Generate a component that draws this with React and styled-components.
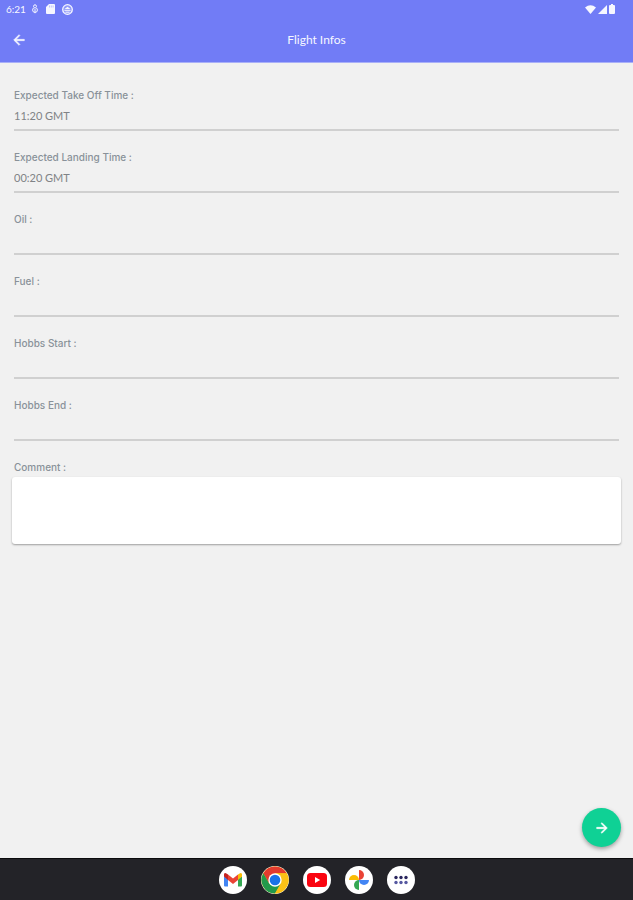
import React, { useId } from "react";
import styled, { createGlobalStyle } from "styled-components";

const GlobalStyle = createGlobalStyle`
  * { box-sizing: border-box; }
  body { margin: 0; background: #f1f1f1; }
  button, input, textarea { font: inherit; }
`;

const Screen = styled.div`
  display: flex;
  flex-direction: column;
  min-height: 100vh;
  background: #f1f1f1;
  font-family: Lato, "Noto Sans", sans-serif;
`;

const Header = styled.header`
  background: #717cf6;
  color: #f6f7ff;
  border-bottom: 1px solid #a9b0f8;
`;

const StatusBar = styled.div`
  display: flex;
  justify-content: space-between;
  align-items: center;
  height: 18px;
  padding: 0 18px 0 6px;
  font-size: 10px;
  line-height: 18px;
`;

const StatusGroup = styled.div`
  display: flex;
  align-items: center;
  gap: ${({ $gap }) => $gap}px;
`;

const Clock = styled.span`
  width: 18px;
`;

const TitleBar = styled.div`
  display: grid;
  grid-template-columns: 38px 1fr 38px;
  align-items: center;
  height: 44px;
`;

const BackButton = styled.button`
  display: grid;
  place-items: center;
  height: 38px;
  padding: 0;
  border: 0;
  background: none;
  color: inherit;
  cursor: pointer;
`;

const Title = styled.h1`
  margin: 0;
  text-align: center;
  font-size: 12px;
  line-height: 16px;
  font-weight: 400;
`;

const Form = styled.form`
  flex: 1;
  display: flex;
  flex-direction: column;
  padding: 24px 12px 11px;
`;

const Field = styled.div`
  display: flex;
  flex-direction: column;
  height: 62px;
  padding: 0 2px;
`;

const CommentField = styled.div`
  display: flex;
  flex-direction: column;
`;

const Label = styled.label`
  font-family: Inter, Roboto, sans-serif;
  font-size: 10px;
  line-height: 16px;
  font-weight: 500;
  color: #899199;
`;

const CommentLabel = styled(Label)`
  padding: 0 2px;
  margin-bottom: 2px;
`;

const TextInput = styled.input`
  width: 100%;
  height: 28px;
  padding: 0 0 2px;
  border: 0;
  border-bottom: 2px solid #d0d0d0;
  border-radius: 0;
  outline: 0;
  background: transparent;
  font-size: 11px;
  color: #808386;
`;

const CommentBox = styled.textarea`
  display: block;
  width: 100%;
  height: 67px;
  padding: 8px;
  border: 0;
  border-radius: 3px;
  outline: 0;
  resize: none;
  background: #fff;
  box-shadow: 0 1px 2px rgba(0, 0, 0, 0.35);
  font-size: 11px;
  color: #808386;
`;

const NextButton = styled.button`
  display: grid;
  place-items: center;
  width: 39px;
  height: 39px;
  margin: auto 0 0 auto;
  padding: 0;
  border: 0;
  border-radius: 50%;
  background: #0fd195;
  color: #fff;
  box-shadow: 0 2px 4px rgba(0, 0, 0, 0.35);
  cursor: pointer;
`;

const Dock = styled.nav`
  display: flex;
  justify-content: center;
  align-items: center;
  gap: 14px;
  height: 42px;
  border-top: 1px solid #0b0b0d;
  background: #232328;
`;

const AppButton = styled.button`
  display: grid;
  place-items: center;
  width: 28px;
  height: 28px;
  padding: 0;
  border: 0;
  border-radius: 50%;
  background: #fff;
  cursor: pointer;
`;

const Arrow = ({ back }) => (
  <svg width="16" height="16" viewBox="0 0 24 24" fill="currentColor" aria-hidden="true">
    {back ? (
      <path d="M20 11H7.83l5.59-5.59L12 4l-8 8 8 8 1.41-1.41L7.83 13H20z" stroke="currentColor" strokeWidth=".8" />
    ) : (
      <path d="M4 11h12.17l-5.59-5.59L12 4l8 8-8 8-1.41-1.41L16.17 13H4z" stroke="currentColor" strokeWidth=".8" />
    )}
  </svg>
);

const MicIcon = () => (
  <svg width="8" height="10" viewBox="0 0 8 10" fill="none" stroke="currentColor" aria-hidden="true">
    <path d="M2.6 3V2.2a1.4 1.4 0 0 1 2.8 0V3" />
    <circle cx="4" cy="6" r="2.4" />
    <path d="M4 4.8v4.4" />
  </svg>
);

const CardIcon = () => (
  <svg width="9" height="10" viewBox="0 0 9 10" aria-hidden="true">
    <path d="M3 0h5q1 0 1 1v8q0 1-1 1H1Q0 10 0 9V3z" fill="currentColor" />
    <path d="M3.5 1.5v2M5.3 1.5v2M7.1 1.5v2" stroke="#aab0fa" strokeWidth=".7" />
  </svg>
);

const FaceIcon = () => (
  <svg width="11" height="11" viewBox="0 0 11 11" aria-hidden="true">
    <circle cx="5.5" cy="5.5" r="4.8" fill="#8f98f8" stroke="currentColor" strokeWidth="1.3" />
    <path d="M2.6 5 5.5 2.8 8.4 5z" fill="currentColor" />
    <path d="M2.4 6.3h6.2M3.4 8.2h4.2" fill="none" stroke="currentColor" />
  </svg>
);

const WifiIcon = () => (
  <svg width="11" height="9" viewBox="0 0 11 9" fill="currentColor" aria-hidden="true">
    <path d="M0 2.5Q5.5-2 11 2.5L5.5 9z" />
  </svg>
);

const SignalIcon = () => (
  <svg width="9" height="9" viewBox="0 0 9 9" fill="currentColor" aria-hidden="true">
    <path d="M9 0v9H0z" />
  </svg>
);

const BatteryIcon = () => (
  <svg width="6" height="10" viewBox="0 0 6 10" fill="currentColor" aria-hidden="true">
    <path d="M2 0h2v1h1q1 0 1 1v7q0 1-1 1H1q-1 0-1-1V2q0-1 1-1h1z" />
  </svg>
);

const GmailIcon = () => (
  <svg width="20" height="16" viewBox="0 0 20 16" aria-hidden="true">
    <path d="M1 4v9.5q0 1 1 1h3V7z" fill="#4285f4" />
    <path d="M19 4v9.5q0 1-1 1h-3V7z" fill="#34a853" />
    <path d="M15 2.6 17 1.2q2-.8 2 1.3v2L15 8z" fill="#fbbc04" />
    <path d="M5 2.6 3 1.2Q1 .4 1 2.5v2L5 8z" fill="#c5221f" />
    <path d="M5 2.6 10 6.5l5-3.9V8l-5 4-5-4z" fill="#ea4335" />
  </svg>
);

const ChromeIcon = () => (
  <svg width="28" height="28" viewBox="0 0 28 28" aria-hidden="true">
    <circle cx="14" cy="14" r="13.5" fill="#fbc116" />
    <path d="M2.3 7.25A13.5 13.5 0 0 1 25.7 7.25H14L8.2 17.4z" fill="#e33b2e" />
    <path d="M2.3 7.25A13.5 13.5 0 0 0 14 27.5L19.8 17.4H8.2z" fill="#229a4b" />
    <path d="M25.7 7.25A13.5 13.5 0 0 1 14 27.5l5.8-10.1L14 7.25z" fill="#fbc116" />
    <circle cx="14" cy="14" r="6.7" fill="#fff" />
    <circle cx="14" cy="14" r="5.3" fill="#1a73e8" />
  </svg>
);

const YoutubeIcon = () => (
  <svg width="20" height="14" viewBox="0 0 20 14" aria-hidden="true">
    <rect width="20" height="14" rx="3.5" fill="#fa0410" />
    <path d="m8 4 5.2 3L8 10z" fill="#fff" />
  </svg>
);

const PhotosIcon = () => (
  <svg width="20" height="20" viewBox="0 0 20 20" aria-hidden="true">
    <path d="M10 0a5 5 0 0 1 0 10z" fill="#ea4335" />
    <path d="M20 10a5 5 0 0 1-10 0z" fill="#4285f4" />
    <path d="M10 20a5 5 0 0 1 0-10z" fill="#34a853" />
    <path d="M0 10a5 5 0 0 1 10 0z" fill="#fbbc04" />
  </svg>
);

const AppsIcon = () => (
  <svg width="14" height="10" viewBox="0 0 14 10" aria-hidden="true">
    <g fill="#29255e">
      <circle cx="2" cy="2.5" r="1.7" />
      <circle cx="7" cy="2.5" r="1.7" />
      <circle cx="12" cy="2.5" r="1.7" />
    </g>
    <g fill="#5558a0">
      <circle cx="2" cy="7.5" r="1.7" />
      <circle cx="7" cy="7.5" r="1.7" />
      <circle cx="12" cy="7.5" r="1.7" />
    </g>
  </svg>
);

const fields = [
  { label: "Expected Take Off Time :", value: "11:20 GMT" },
  { label: "Expected Landing Time :", value: "00:20 GMT" },
  { label: "Oil :", value: "" },
  { label: "Fuel :", value: "" },
  { label: "Hobbs Start :", value: "" },
  { label: "Hobbs End :", value: "" },
];

const apps = [
  { name: "Gmail", Icon: GmailIcon },
  { name: "Chrome", Icon: ChromeIcon },
  { name: "YouTube", Icon: YoutubeIcon },
  { name: "Photos", Icon: PhotosIcon },
  { name: "All apps", Icon: AppsIcon },
];

function FormField({ label, value }) {
  const id = useId();
  return (
    <Field>
      <Label htmlFor={id}>{label}</Label>
      <TextInput id={id} type="text" defaultValue={value} />
    </Field>
  );
}

export default function App() {
  return (
    <Screen>
      <GlobalStyle />
      <Header>
        <StatusBar>
          <StatusGroup $gap={7}>
            <Clock>6:21</Clock>
            <MicIcon />
            <CardIcon />
            <FaceIcon />
          </StatusGroup>
          <StatusGroup $gap={2}>
            <WifiIcon />
            <SignalIcon />
            <BatteryIcon />
          </StatusGroup>
        </StatusBar>
        <TitleBar>
          <BackButton type="button" aria-label="Back">
            <Arrow back />
          </BackButton>
          <Title>Flight Infos</Title>
        </TitleBar>
      </Header>
      <Form onSubmit={(event) => event.preventDefault()}>
        {fields.map((field) => (
          <FormField key={field.label} {...field} />
        ))}
        <CommentField>
          <CommentLabel htmlFor="comment">Comment :</CommentLabel>
          <CommentBox id="comment" />
        </CommentField>
        <NextButton type="submit" aria-label="Next">
          <Arrow />
        </NextButton>
      </Form>
      <Dock aria-label="Apps">
        {apps.map(({ name, Icon }) => (
          <AppButton key={name} type="button" aria-label={name}>
            <Icon />
          </AppButton>
        ))}
      </Dock>
    </Screen>
  );
}
